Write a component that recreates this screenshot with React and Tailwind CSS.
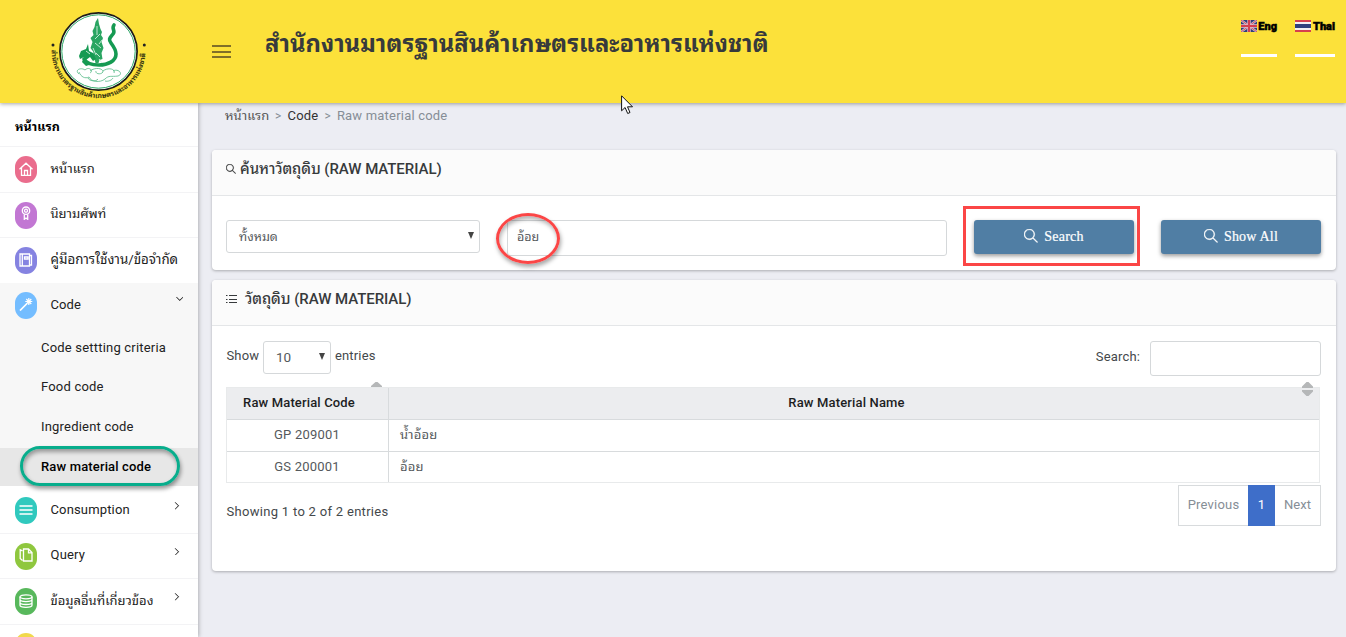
import React from "react";
import { TfiSearch, TfiAngleDown, TfiAngleRight } from "react-icons/tfi";

function Icon({ children, className = "" }) {
  return (
    <svg className={className} width="14" height="14" viewBox="0 0 14 14" fill="none" stroke="#fff" strokeWidth="1.3">
      {children}
    </svg>
  );
}

const HomeIcon = () => (
  <Icon className="mb-[2px]"><path d="M.5 7.2L7 1.2l6.500 6M2.500 5.800v7.500h9V5.800M5.500 13.300V8.500h3v4.800" /></Icon>
);
const MedalIcon = () => (
  <Icon className="mb-[5px]">
    <circle cx="7" cy="4.700" r="3.700" />
    <circle cx="7" cy="4.700" r="1.500" />
    <path d="M5.300 8.500v4.800L7 12l1.700 1.300V8.500" />
  </Icon>
);
const BookIcon = () => (
  <Icon className="mb-[2px]"><path d="M1 1h9.500v12H1zM3.300 1v12M5.500 4h3.500v2h-3.500zM10.500 2.500h2v9.500h-2" /></Icon>
);
const WandIcon = () => (
  <Icon className="mb-[3px]">
    <path d="M1 13.500L8 6.500" strokeWidth="1.700" />
    <path d="M9.800 1v7M6.300 4.500h7M7.300 2l5 5M12.300 2l-5 5" strokeWidth="1.200" />
  </Icon>
);
const MenuIcon = () => (
  <Icon className="mb-[1px]"><path d="M.5 3h13M.5 7h13M.5 11h13" strokeWidth="1.700" /></Icon>
);
const FilesIcon = () => (
  <Icon className="mb-[2px]">
    <path d="M4.500 1h5l3.500 3.500V13H4.500zM9.500 1v3.800H13M3.500 2.800L1.200 1.800v8.700l2.300 2" />
  </Icon>
);
const DbIcon = () => (
  <Icon className="mb-[2px]">
    <ellipse cx="7" cy="2.800" rx="6" ry="2" />
    <path d="M1 2.800v8.500c0 1.200 2.700 2 6 2s6-.8 6-2V2.800M1 5.600c0 1.200 2.700 2 6 2s6-.8 6-2M1 8.500c0 1.200 2.700 2 6 2s6-.8 6-2" />
  </Icon>
);

function Pill({ color, children }) {
  return (
    <span className={"flex h-[27px] w-[22px] shrink-0 items-center justify-center rounded-[11px] " + color}>
      {children}
    </span>
  );
}

const chevron = "stroke-black [stroke-width:0.6px]";

function Row({ color, icon, label, labelClass = "", arrow, className = "" }) {
  return (
    <div className={"flex items-center pl-[15px] " + className}>
      <Pill color={color}>{icon}</Pill>
      <span className={"ml-[13.5px] whitespace-nowrap pb-[2px] " + labelClass}>{label}</span>
      {arrow === "down" && <span className="mr-[15px] ml-auto pb-[13px] text-[7.500px] text-black"><TfiAngleDown className={chevron} /></span>}
      {arrow === "right" && <span className="mr-[18px] ml-auto pb-[9px] text-[7.500px] text-black"><TfiAngleRight className={chevron} /></span>}
    </div>
  );
}

function Emblem() {
  return (
    <svg className="ml-[48px] h-[96px] w-[101px] shrink-0 overflow-visible" viewBox="48 7 101 96">
      <circle cx="98.5" cy="51.500" r="38.600" fill="#fff" stroke="#1c1c18" strokeWidth="1.700" />
      <circle cx="98.5" cy="51.500" r="36.700" fill="none" stroke="#2ba866" strokeWidth="1" />
      <path d="M98 18l1 6 1.500 5 1.500 3-1 3 2 3-1.500 4 2 6-2 5 1 6-3 1-1 3h-3l-1-4-2-1 1-6-3-4 2-6-2-4 3-3-1-4 2-4 1-5z" fill="#2aa562" />
      <path d="M114 25c-3 4 2 6-1 9-3 4-5 5-2 9 3 4 5 7 5 11 0 7-8 11-17 11-8 0-13-2-15-6" fill="none" stroke="#159a52" strokeWidth="3.600" strokeLinecap="round" />
      <path d="M88 44l-2 5-5 2-2 5 1 3 4-2-2 5 4 4 3-1-3-5 4-3 3 4 3-2-3-6-4-2z" fill="#159a52" />
      <path d="M97 26v9M100 34l-5 5M95 43l6 5M96 53l4 4M93 48l3 7M86 51l4 3M102 40l-3 4M99 59l3 4" stroke="#d3f0df" strokeWidth=".9" fill="none" />
      <path d="M79 74c-5-4 2-7 6-4 4-4 9 1 5 3m0-2c5-4 13-3 13 1-2 3-8 2-7-1m7 0c5-4 13-2 11 2m-1-2c5-3 11 3 5 5-7 1-9-1-13 3-5 4-14 3-16-2-4 2-8 0-10-5m9 6c1 3 8 4 10 1m7 2c3 1 7-1 8-3" fill="none" stroke="#53b985" strokeWidth=".8" />
      <path id="ring" d="M51.600 50A47 47 0 0 0 98.500 98A47 47 0 0 0 145.400 50" fill="none" />
      <text className="font-['Noto_Sans_Thai_Looped','Loma','Waree','Noto_Serif_Thai',sans-serif]" fontSize="6.800" fontWeight="700" fill="#33300f" textLength="146" lengthAdjust="spacingAndGlyphs">
        <textPath href="#ring" startOffset="0" textLength="146" lengthAdjust="spacingAndGlyphs">สำนักงานมาตรฐานสินค้าเกษตรและอาหารแห่งชาติ</textPath>
      </text>
      <circle cx="53" cy="45" r="1.500" fill="#222" />
      <circle cx="144.300" cy="45" r="1.500" fill="#222" />
    </svg>
  );
}

function UkFlag() {
  return (
    <svg width="16" height="12" viewBox="0 0 16 12">
      <path fill="#303e78" d="M0 0h16v12H0z" />
      <path d="M0 0l16 12M16 0L0 12" stroke="#c9bfd4" strokeWidth="2.200" />
      <path d="M0 0l16 12M16 0L0 12" stroke="#d6505f" strokeWidth="1" />
      <path d="M8 0v12M0 6h16" stroke="#e4c4d0" strokeWidth="3.400" />
      <path d="M8 0v12M0 6h16" stroke="#d33e50" strokeWidth="2.200" />
    </svg>
  );
}

function ThaiFlag() {
  return (
    <svg width="16" height="12" viewBox="0 0 16 12">
      <path fill="#d6404e" d="M0 0h16v12H0z" />
      <path fill="#f1eff2" d="M0 2h16v8H0z" />
      <path fill="#2f3f7d" d="M0 4h16v4H0z" />
    </svg>
  );
}

function Lang({ flag, label, className }) {
  return (
    <div className={"flex h-[37px] items-start justify-between border-b-[3px] border-white " + className}>
      {flag}
      <span className="text-[11px] leading-[13px] font-black text-black [-webkit-text-stroke:0.5px_black]">{label}</span>
    </div>
  );
}

function Button({ label }) {
  return (
    <button className="flex h-[34px] w-[160px] items-center justify-center rounded-[3px] bg-[#507ea4] font-['Liberation_Serif',serif] text-[14px] text-white shadow-[0_2px_4px_rgba(0,0,0,0.4)]">
      <TfiSearch className="mr-[6px] mb-[2px] stroke-white text-[14px] [stroke-width:0.5px]" />
      <span className="tracking-[0.200px] [-webkit-text-stroke:0.2px_white]">{label}</span>
    </button>
  );
}

const card = "rounded-[4px] bg-white shadow-[0_1px_3px_rgba(0,0,0,0.28)]";
const cardHead = "flex h-[46px] items-center rounded-t-[4px] border-b border-[#e4e6e8] bg-[#fbfbfb] pl-[14px] pb-[7px] text-[15px] font-medium tracking-[-0.060px] text-[#373a3c]";

export default function App() {
  return (
    <div className="relative flex h-[637px] w-[1346px] flex-col overflow-hidden bg-[#ecedf3] font-['Roboto','Noto_Sans_Thai_Looped','Loma','Waree','Noto_Serif_Thai','Noto_Sans_Thai',sans-serif] text-[13px] leading-[20px] text-[#222]">
      <header className="relative z-10 flex h-[103px] shrink-0 bg-[#fce13a] shadow-[0_1px_4px_rgba(0,0,0,0.35)]">
        <div className="flex w-[198px] pt-[7px]"><Emblem /></div>
        <div className="mt-[45px] ml-[14px] flex h-[13px] w-[19px] flex-col justify-between">
          <i className="h-[2px] bg-[#806f28]" />
          <i className="h-[2px] bg-[#806f28]" />
          <i className="h-[2px] bg-[#806f28]" />
        </div>
        <h1 className="mt-[27px] ml-[34px] text-[23.800px] leading-[34px] font-bold whitespace-nowrap text-[#373a3c]">สำนักงานมาตรฐานสินค้าเกษตรและอาหารแห่งชาติ</h1>
        <div className="mt-[20px] mr-[11px] ml-auto flex gap-[18px]">
          <Lang flag={<UkFlag />} label="Eng" className="w-[36px]" />
          <Lang flag={<ThaiFlag />} label="Thai" className="w-[40px]" />
        </div>
      </header>

      <div className="flex min-h-0 flex-1">
        <aside className="w-[198px] shrink-0 bg-white shadow-[1px_0_4px_rgba(0,0,0,0.25)]">
          <div className="flex h-[44px] items-center border-b border-[#f3f3f5] pt-[4px] pl-[15px] text-[12.500px] font-bold text-black">หน้าแรก</div>
          <Row color="bg-[#ea6d8d]" icon={<HomeIcon />} label="หน้าแรก" className="h-[46px] border-b border-[#f3f3f5]" />
          <Row color="bg-[#c277d3]" icon={<MedalIcon />} label="นิยามศัพท์" className="h-[45px] border-b border-[#f3f3f5]" />
          <Row color="bg-[#8583e1]" icon={<BookIcon />} label="คู่มือการใช้งาน/ข้อจำกัด" labelClass="text-[13.300px]" className="h-[45px]" />
          <div className="bg-[#f7f7f7]">
            <Row color="bg-[#74bdff]" icon={<WandIcon />} label="Code" labelClass="tracking-[0.1px]" arrow="down" className="h-[45px]" />
            <div className="flex h-[39px] items-center pl-[41px] tracking-[0.200px]">Code settting criteria</div>
            <div className="flex h-[40px] items-center pl-[41px] tracking-[0.2px]">Food code</div>
            <div className="flex h-[41px] items-center pb-[2px] pl-[41px] tracking-[0.200px]">Ingredient code</div>
            <div className="relative flex h-[38px] items-center bg-[#e7e7e7] pl-[41px] font-medium tracking-[0.150px] text-black">
              Raw material code
              <span className="absolute top-[-2px] left-[20px] h-[40px] w-[160px] rounded-[20px] border-[3px] border-[#08ad8c] shadow-[1px_3px_4px_rgba(0,0,0,0.4),inset_1px_3px_4px_rgba(0,0,0,0.35)]" />
            </div>
          </div>
          <Row color="bg-[#30c9be]" icon={<MenuIcon />} label="Consumption" labelClass="tracking-[0.150px]" arrow="right" className="mt-[2px] h-[46px] border-b border-[#f3f3f5]" />
          <Row color="bg-[#8fc73e]" icon={<FilesIcon />} label="Query" labelClass="tracking-[0.200px]" arrow="right" className="h-[45px] border-b border-[#f3f3f5]" />
          <Row color="bg-[#58b85c]" icon={<DbIcon />} label="ข้อมูลอื่นที่เกี่ยวข้อง" arrow="right" className="h-[46px] border-b border-[#f3f3f5]" />
          <div className="pt-[8px] pl-[15px]"><Pill color="bg-[#f1d94c]" /></div>
        </aside>

        <main className="flex-1 pr-[10px] pl-[14px]">
          <nav className="mt-[3px] ml-[13px] flex h-[20px] items-center gap-[6px] tracking-[0.200px] whitespace-nowrap text-[#868e96]">
            <span className="w-[44px] tracking-normal text-[#555]">หน้าแรก</span>
            <span className="text-[12px]">&gt;</span>
            <span className="text-[#333]">Code</span>
            <span className="text-[12px]">&gt;</span>
            <span>Raw material code</span>
          </nav>

          <section className={card + " mt-[24px] h-[120px]"}>
            <h2 className={cardHead}><TfiSearch className="mr-[4px] stroke-[#333] text-[10px] [stroke-width:0.6px]" />ค้นหาวัตถุดิบ (RAW MATERIAL)</h2>
            <div className="flex items-start pt-[24px] pl-[14px]">
              <div className="flex h-[33px] w-[254px] items-center justify-between rounded-[3px] border border-[#d5d8da] pr-[5px] pl-[12px] text-[#55595c]">
                <span className="text-[12.500px]">ทั้งหมด</span>
                <svg width="6" height="7" viewBox="0 0 6 7" className="mb-[2px]"><path d="M0 0h6L3 7z" fill="#444" /></svg>
              </div>
              <div className="relative ml-[27px] flex h-[36px] w-[440px] items-center rounded-[3px] border border-[#d5d8da] pb-[2px] pl-[9px] text-[12.500px] text-[#55595c]">
                อ้อย
                <span className="absolute top-[-8px] left-[-12px] h-[51px] w-[64px] rounded-[50%] border-[3px] border-[#fb4646] shadow-[1px_3px_4px_rgba(0,0,0,0.35),inset_1px_3px_4px_rgba(0,0,0,0.3)]" />
              </div>
              <div className="relative ml-[27px]">
                <Button label="Search" />
                <span className="absolute top-[-14px] left-[-11px] h-[60px] w-[177px] border-[3px] border-[#fb4646]" />
              </div>
              <div className="ml-[27px]"><Button label="Show All" /></div>
            </div>
          </section>

          <section className={card + " mt-[10px] h-[291px]"}>
            <h2 className={cardHead}>
              <svg className="mr-[8px]" width="11" height="10" viewBox="0 0 11 10"><path d="M0 1.500h1.500M3 1.500h8M0 5.500h1.500M3 5.500h8M0 8.500h1.500M3 8.500h8" stroke="#373a3c" /></svg>
              วัตถุดิบ (RAW MATERIAL)
            </h2>
            <div className="flex h-[61px] items-start justify-between pt-[15px] pr-[15px] pl-[14.500px] tracking-[0.150px] text-[#44484b]">
              <div className="flex items-start">
                <span className="mt-[5px] w-[36.500px]">Show</span>
                <div className="flex h-[33px] w-[68px] items-center justify-between rounded-[3px] border border-[#d5d8da] pr-[5px] pl-[12px] text-[13.500px] tracking-normal text-[#55595c]">
                  <span className="pb-[1px]">10</span>
                  <svg width="6" height="7" viewBox="0 0 6 7" className="mb-[2px]"><path d="M0 0h6L3 7z" fill="#444" /></svg>
                </div>
                <span className="mt-[5px] ml-[4px]">entries</span>
              </div>
              <div className="flex items-start">
                <span className="mt-[6px]">Search:</span>
                <div className="ml-[10px] h-[35px] w-[171px] rounded-[3px] border border-[#d5d8da]" />
              </div>
            </div>
            <div className="mr-[16px] ml-[14px] border border-[#e8eaeb] tracking-[0.2px] text-[#55595c]">
              <div className="flex h-[32px] border-b border-[#d8dbdd] bg-[#ecedef] font-medium text-[#1d1e1f]">
                <div className="relative flex w-[162px] items-center border-r border-[#d8dbdd] pr-[17px] pb-[1px]">
                  <span className="w-full text-center tracking-[0.150px]">Raw Material Code</span>
                  <svg className="absolute top-[-6px] right-[6px]" width="11" height="5" viewBox="0 0 11 5"><path d="M0 5V4L4.500 0h2L11 4v1z" fill="#b5b7b8" /></svg>
                </div>
                <div className="relative flex flex-1 items-center justify-center pr-[15px] pb-[1px]">
                  <span className="tracking-[0.150px]">Raw Material Name</span>
                  <svg className="absolute top-[-6px] right-[6px]" width="11" height="14" viewBox="0 0 11 14"><path d="M0 6V4.500L4.500 0h2L11 4.500V6zM0 8h11v1.500L6.500 14h-2L0 9.500z" fill="#b5b7b8" /></svg>
                </div>
              </div>
              <div className="flex h-[32px] border-b border-[#d8dbdd]">
                <div className="w-[162px] border-r border-[#d8dbdd] pt-[5px] pr-[1px] text-center">GP 209001</div>
                <div className="pt-[5px] pl-[11px]">น้ำอ้อย</div>
              </div>
              <div className="flex h-[30px]">
                <div className="w-[162px] border-r border-[#d8dbdd] pt-[5px] pr-[1px] text-center">GS 200001</div>
                <div className="pt-[5px] pl-[11px]">อ้อย</div>
              </div>
            </div>
            <div className="flex justify-between pt-[2px] pr-[15px] pl-[14.500px]">
              <span className="mt-[17px] tracking-[0.300px] text-[#44484b]">Showing 1 to 2 of 2 entries</span>
              <div className="flex h-[41px] text-[#868e96]">
                <span className="w-[70px] border border-r-0 border-[#d8dbdd] pt-[9px] text-center tracking-[0.2px]">Previous</span>
                <span className="w-[27px] bg-[#3e6ec9] pt-[10px] text-center text-white">1</span>
                <span className="w-[46px] border border-l-0 border-[#d8dbdd] pt-[9px] text-center">Next</span>
              </div>
            </div>
          </section>
        </main>
      </div>

      <svg className="absolute top-[95px] left-[621px] z-20" width="13" height="20" viewBox="0 0 13 20">
        <path d="M.6.8v15l3.500-3.300 2.600 6 2.300-1-2.500-5.700h5z" fill="#fff" stroke="#111" strokeWidth="1" />
      </svg>
    </div>
  );
}
